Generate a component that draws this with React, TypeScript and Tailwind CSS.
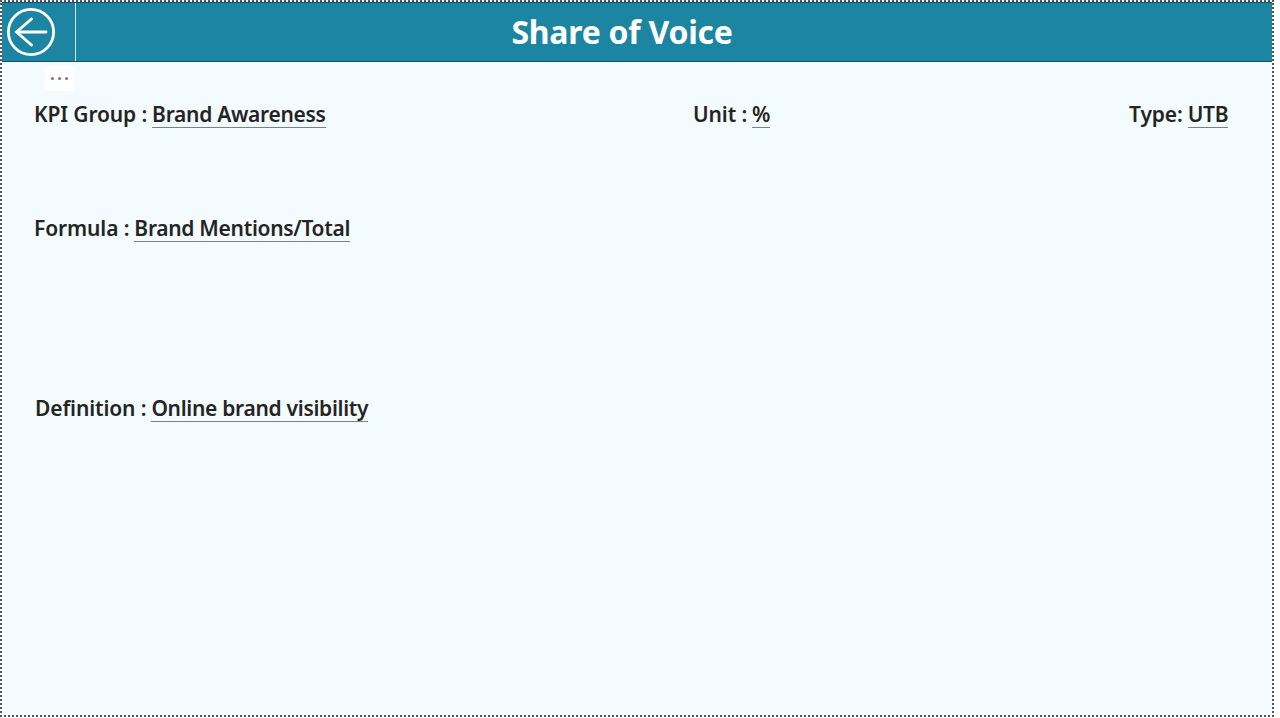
function Field({ label, value }: { label: string; value: string }) {
  return (
    <p className="flex gap-[5px] whitespace-nowrap text-[21px] leading-[26px] font-semibold text-[#252423]">
      <span className="tracking-[-0.12px]">{label}</span>
      <span className="border-b border-[#6f7fa8] tracking-[-0.3px]">{value}</span>
    </p>
  );
}

export default function App() {
  return (
    <div className="h-[718px] w-[1280px] overflow-hidden bg-white font-['Noto_Sans','Open_Sans',sans-serif]">
      <div className="flex h-[717px] w-[1274px] flex-col border-2 border-dotted border-[#555555] bg-[#f3fbfe]">
        {/* Header */}
        <header className="flex h-[60px] shrink-0 border-y border-[#12506a] bg-[#1c85a1] text-white">
          <button className="flex w-[74px] shrink-0 items-center pl-[5px] border-r border-[#d5e8ee]">
            <svg width="48" height="48" viewBox="0 0 48 48" fill="none" stroke="currentColor" strokeWidth="2.8" strokeLinecap="round">
              <circle cx="24" cy="24" r="22.6" />
              <path d="M39 24H9.5M24.5 11 9.5 24l15 13" />
            </svg>
          </button>
          <h1 className="flex-1 pr-[104px] text-center text-[32px] leading-[58px] font-bold tracking-[-0.25px]">Share of Voice</h1>
        </header>

        <div className="relative flex-1 pt-[39px] pl-[32px]">
          {/* Visual menu */}
          <div className="absolute top-[4px] left-[43px] flex h-[25px] w-[29px] items-center justify-center gap-[4px] bg-white">
            <span className="size-[3px] rounded-full bg-[#777777]" />
            <span className="size-[3px] rounded-full bg-[#777777]" />
            <span className="size-[3px] rounded-full bg-[#777777]" />
          </div>

          <div className="flex">
            <div className="w-[659px]">
              <Field label="KPI Group :" value="Brand Awareness" />
            </div>
            <div className="w-[436px]">
              <Field label="Unit :" value="%" />
            </div>
            <Field label="Type:" value="UTB" />
          </div>
          <div className="mt-[87px]">
            <Field label="Formula :" value="Brand Mentions/Total" />
          </div>
          <div className="mt-[153px] pl-px">
            <Field label="Definition :" value="Online brand visibility" />
          </div>
        </div>
      </div>
    </div>
  );
}
